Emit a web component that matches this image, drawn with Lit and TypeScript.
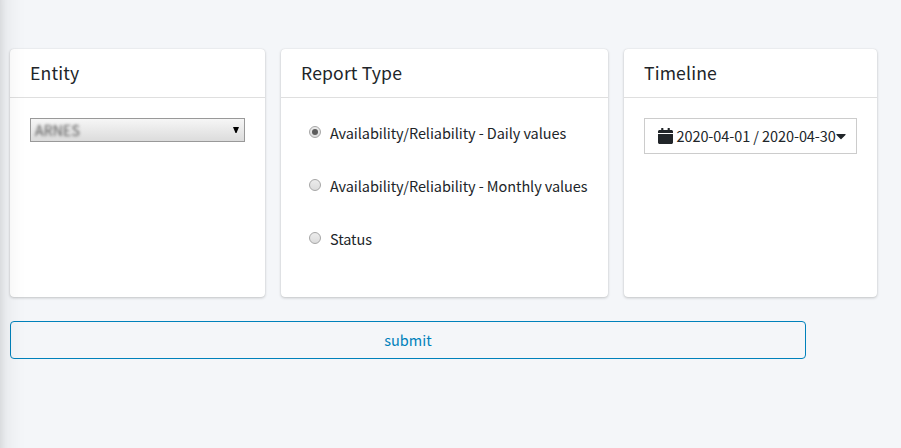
import { LitElement, html, css, svg } from "lit";
import { customElement, property, state } from "lit/decorators.js";
import { classMap } from "lit/directives/class-map.js";

@customElement("report-card")
class ReportCard extends LitElement {
  @property() heading = "";

  static styles = css`
    :host {
      display: flex;
      flex-direction: column;
      background: #fff;
      border-radius: 4px;
      box-shadow: 0 0 1px rgba(0, 0, 0, 0.125), 0 1px 3px rgba(0, 0, 0, 0.2);
    }
    .title {
      box-sizing: border-box;
      height: 49px;
      padding: 0 20px;
      border-bottom: 1px solid #dfdfdf;
      font-size: 17.6px;
      letter-spacing: 0.15px;
      line-height: 48px;
    }
    .body {
      padding: 20px;
    }
  `;

  render() {
    return html`
      <div class="title">${this.heading}</div>
      <div class="body"><slot></slot></div>
    `;
  }
}

@customElement("app-root")
class AppRoot extends LitElement {
  @state() private selected = 0;

  private types = [
    "Availability/Reliability - Daily values",
    "Availability/Reliability - Monthly values",
    "Status",
  ];

  static styles = css`
    :host {
      display: block;
      position: relative;
      box-sizing: border-box;
      height: 448px;
      padding: 49px 24px 0 10px;
      overflow: hidden;
      background: #f4f6f9;
      color: #212529;
      font-family: "Noto Sans CJK JP", sans-serif;
      font-size: 14.5px;
    }
    .edge {
      position: absolute;
      top: -40px;
      bottom: -40px;
      left: -22px;
      width: 20px;
      box-shadow: 0 14px 28px rgba(0, 0, 0, 0.16), 0 10px 10px rgba(0, 0, 0, 0.15);
      pointer-events: none;
    }
    .cards {
      display: grid;
      grid-template-columns: 255px 327px 253px;
      column-gap: 16px;
      height: 248px;
    }
    .select {
      display: flex;
      box-sizing: border-box;
      align-items: center;
      justify-content: space-between;
      height: 24px;
      padding: 0 5px 0 4px;
      border: 1px solid #999;
      background: linear-gradient(#f6f6f6, #dcdcdc);
    }
    .entity {
      color: #505050;
      font-size: 14px;
      letter-spacing: 0.2px;
      line-height: 22px;
      filter: blur(1.4px);
    }
    .arrow {
      display: block;
      width: 6px;
      height: 6px;
      margin-bottom: 1px;
    }
    .options {
      display: flex;
      flex-direction: column;
      padding-left: 8px;
    }
    .option {
      display: flex;
      align-items: center;
      gap: 9px;
      height: 28px;
      margin-bottom: 25px;
      white-space: nowrap;
    }
    .label {
      padding-top: 2px;
      font-size: 14.5px;
      letter-spacing: -0.075px;
      line-height: 22px;
    }
    .radio {
      display: flex;
      flex: none;
      align-items: center;
      justify-content: center;
      box-sizing: border-box;
      width: 12px;
      height: 12px;
      border: 1px solid #a6a6a6;
      border-radius: 50%;
      background: linear-gradient(#ececec, #dcdcdc);
    }
    .radio.on::after {
      content: "";
      width: 6px;
      height: 6px;
      border-radius: 50%;
      background: #5c5c5c;
    }
    .range {
      display: flex;
      box-sizing: border-box;
      align-items: center;
      height: 36px;
      padding: 0 10px 0 13px;
      border: 1px solid #ccc;
      white-space: nowrap;
    }
    .calendar {
      width: 15px;
      height: 16px;
      margin-right: 3.5px;
    }
    .dates {
      letter-spacing: -0.08px;
      line-height: 22px;
    }
    .caret {
      width: 10px;
      height: 16px;
    }
    .submit {
      display: block;
      box-sizing: border-box;
      width: 796px;
      height: 38px;
      margin: 24px 0 0;
      padding: 0;
      border: 1px solid #0081bb;
      border-radius: 4px;
      background: transparent;
      color: #0081bb;
      font: inherit;
      line-height: 36px;
    }
  `;

  render() {
    return html`
      <div class="cards">
        <report-card heading="Entity">
          <div class="select">
            <span class="entity">ARNES</span>
            <svg class="arrow" viewBox="0 0 6 6">${svg`<path d="M0 0h6L3.500 6h-1z" />`}</svg>
          </div>
        </report-card>
        <report-card heading="Report Type">
          <div class="options">
            ${this.types.map(
              (label, i) => html`
                <div class="option" @click=${() => (this.selected = i)}>
                  <span class=${classMap({ radio: true, on: i === this.selected })}></span>
                  <span class="label">${label}</span>
                </div>
              `
            )}
          </div>
        </report-card>
        <report-card heading="Timeline">
          <div class="range">
            <svg class="calendar" viewBox="0 0 448 512" preserveAspectRatio="none" fill="currentColor">
              <path d="M12 192h424c6.600 0 12 5.400 12 12v260c0 26.500-21.500 48-48 48H48c-26.500 0-48-21.500-48-48V204c0-6.600 5.400-12 12-12zm436-44v-36c0-26.500-21.500-48-48-48h-48V12c0-6.600-5.400-12-12-12h-40c-6.600 0-12 5.400-12 12v52H160V12c0-6.600-5.400-12-12-12h-40c-6.600 0-12 5.400-12 12v52H48C21.500 64 0 85.500 0 112v36c0 6.600 5.400 12 12 12h424c6.600 0 12-5.400 12-12z" />
            </svg>
            <span class="dates">2020-04-01 / 2020-04-30</span>
            <svg class="caret" viewBox="0 0 320 512" fill="currentColor">
              <path d="M31.300 192h257.300c17.800 0 26.700 21.500 14.100 34.100L174.100 354.800c-7.800 7.800-20.500 7.800-28.300 0L17.200 226.100C4.600 213.500 13.500 192 31.300 192z" />
            </svg>
          </div>
        </report-card>
      </div>
      <button class="submit">submit</button>
      <div class="edge"></div>
    `;
  }
}
